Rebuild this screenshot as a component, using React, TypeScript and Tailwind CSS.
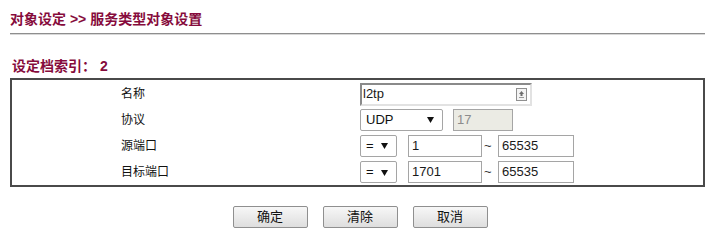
const maroon = "text-[#860b3c]";

const TextBox = ({
  value,
  width,
  disabled,
}: {
  value: string;
  width: string;
  disabled?: boolean;
}) => (
  <div
    className={`${width} h-[22px] border border-[#a5a5a5] flex items-center pl-[3px] text-[13px] ${
      disabled ? "bg-[#ebebe4] text-[#8c8c8c]" : "bg-white text-[#1a1a1a]"
    }`}
  >
    {value}
  </div>
);

const Arrow = () => (
  <svg width="7" height="7" viewBox="0 0 7 7">
    <polygon points="0,1 7,1 3.5,7" fill="#111" />
  </svg>
);

const Select = ({ value, width }: { value: string; width: string }) => (
  <div
    className={`${width} h-[22px] border border-[#a5a5a5] rounded-[2px] bg-white flex items-center justify-between pl-[5px] pr-[8px] text-[13px] text-[#111]`}
  >
    <span>{value}</span>
    <Arrow />
  </div>
);

const Row = ({
  label,
  h,
  children,
}: {
  label: string;
  h: string;
  children: React.ReactNode;
}) => (
  <div className={`flex items-center ${h}`}>
    <div className="w-[348px] pl-[109px] text-[12px] text-[#111]">{label}</div>
    <div className="flex items-center">{children}</div>
  </div>
);

const Button = ({ label }: { label: string }) => (
  <button className="w-[75px] h-[22px] border border-[#8f8f8f] rounded-[2px] bg-gradient-to-b from-[#f7f7f7] to-[#dedede] text-[13px] text-[#111]">
    {label}
  </button>
);

const App = () => {
  return (
    <div
      className="w-[715px] h-[244px] bg-white px-[10px] pt-[11px]"
      style={{ fontFamily: '"Liberation Sans", "Noto Sans CJK SC", sans-serif' }}
    >
      {/* Header */}
      <div className={`h-[16px] leading-[16px] text-[14px] font-bold ${maroon}`}>
        对象设定 &gt;&gt; 服务类型对象设置
      </div>
      <div className="mt-[6px] h-[2px] border-t border-[#8e8e8e] border-b border-b-[#d8d8d8]" />

      <div className={`mt-[23px] pl-[2px] h-[16px] leading-[16px] text-[14px] font-bold ${maroon}`}>
        设定档索引： 2
      </div>

      {/* Form box */}
      <div className="mt-[4px] h-[109px] border-2 border-[#4a4a4a] pt-[1px]">
        <Row label="名称" h="h-[26px]">
          <div className="w-[172px] h-[23px] border-2 border-t-[#8a8a8a] border-l-[#8a8a8a] border-r-[#e2e2e2] border-b-[#e2e2e2] bg-white flex items-center justify-between pl-[1px] pr-[3px] text-[13px] text-[#1a1a1a]">
            <span>l2tp</span>
            <svg width="11" height="13" viewBox="0 0 11 13">
              <rect x="0.5" y="0.5" width="10" height="12" fill="#f3f3f3" stroke="#8f8f8f" />
              <polygon points="5.5,3 8,6 3,6" fill="#6d6d6d" />
              <rect x="4.5" y="6" width="2" height="2" fill="#6d6d6d" />
              <rect x="3" y="9" width="5" height="1" fill="#9a9a9a" />
            </svg>
          </div>
        </Row>
        <Row label="协议" h="h-[25px]">
          <Select value="UDP" width="w-[83px]" />
          <div className="ml-[10px]">
            <TextBox value="17" width="w-[60px]" disabled />
          </div>
        </Row>
        <Row label="源端口" h="h-[27px]">
          <Select value="=" width="w-[37px]" />
          <div className="ml-[11px]">
            <TextBox value="1" width="w-[74px]" />
          </div>
          <span className="w-[16px] pl-[2px] text-[13px] text-[#333]">~</span>
          <TextBox value="65535" width="w-[76px]" />
        </Row>
        <Row label="目标端口" h="h-[26px]">
          <Select value="=" width="w-[37px]" />
          <div className="ml-[11px]">
            <TextBox value="1701" width="w-[74px]" />
          </div>
          <span className="w-[16px] pl-[2px] text-[13px] text-[#333]">~</span>
          <TextBox value="65535" width="w-[76px]" />
        </Row>
      </div>

      {/* Actions */}
      <div className="mt-[19px] flex justify-center gap-[15px] pl-[5px]">
        <Button label="确定" />
        <Button label="清除" />
        <Button label="取消" />
      </div>
    </div>
  );
};

export default App;
